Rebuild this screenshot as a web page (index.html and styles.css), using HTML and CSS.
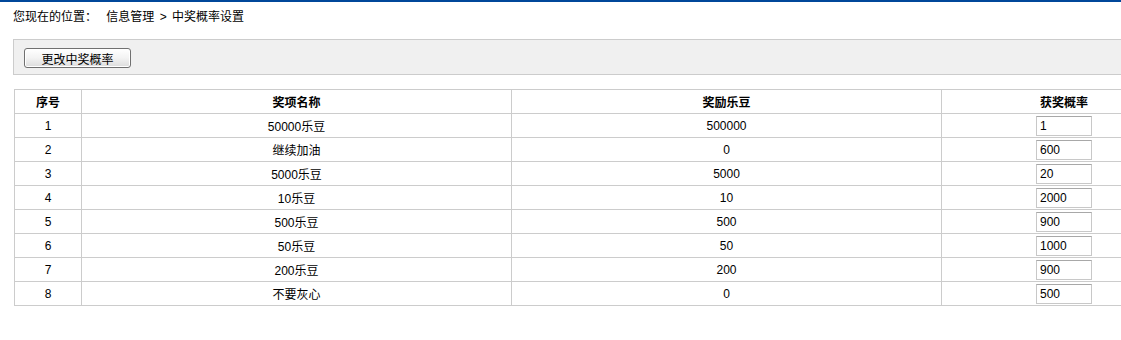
FILE: index.html
```html
<!DOCTYPE html>
<html lang="zh-CN">

<head>
    <meta charset="UTF-8">
    <title>中奖概率设置</title>
    <link rel="stylesheet" href="styles.css">
</head>

<body>
    <div class="page">
        <div class="position">
            <span class="label">您现在的位置：</span>
            <span>信息管理</span>
            <span class="sep">&gt;</span>
            <span>中奖概率设置</span>
        </div>

        <div class="toolbar">
            <button class="btn" type="button">更改中奖概率</button>
        </div>

        <table class="list">
            <thead>
                <tr>
                    <th class="col-no">序号</th>
                    <th class="col-name">奖项名称</th>
                    <th class="col-bean">奖励乐豆</th>
                    <th class="col-rate">获奖概率</th>
                </tr>
            </thead>
            <tbody>
                <tr><td>1</td><td>50000乐豆</td><td>500000</td><td><input class="rate" type="text" value="1"></td></tr>
                <tr><td>2</td><td>继续加油</td><td>0</td><td><input class="rate" type="text" value="600"></td></tr>
                <tr><td>3</td><td>5000乐豆</td><td>5000</td><td><input class="rate" type="text" value="20"></td></tr>
                <tr><td>4</td><td>10乐豆</td><td>10</td><td><input class="rate" type="text" value="2000"></td></tr>
                <tr><td>5</td><td>500乐豆</td><td>500</td><td><input class="rate" type="text" value="900"></td></tr>
                <tr><td>6</td><td>50乐豆</td><td>50</td><td><input class="rate" type="text" value="1000"></td></tr>
                <tr><td>7</td><td>200乐豆</td><td>200</td><td><input class="rate" type="text" value="900"></td></tr>
                <tr><td>8</td><td>不要灰心</td><td>0</td><td><input class="rate" type="text" value="500"></td></tr>
            </tbody>
        </table>
    </div>
</body>

</html>
```

FILE: styles.css
```css
html, body {
    margin: 0;
    padding: 0;
}

body {
    font-family: "Liberation Sans", "Noto Sans CJK SC", sans-serif;
    font-size: 12px;
    color: #000000;
    background-color: #ffffff;
    border-top: 2px solid #00479a;
    overflow: hidden;
}

.page {
    width: 1190px;
    padding: 0 0 0 13px;
}

.position {
    height: 28px;
    line-height: 28px;
    padding-top: 1px;
}

.position .label {
    margin-right: 6px;
}

.position .sep {
    margin: 0 2px;
}

.toolbar {
    margin-top: 8px;
    height: 36px;
    background-color: #f0f0f0;
    border: 1px solid #cccccc;
    border-right: none;
    padding: 8px 0 0 10px;
    box-sizing: border-box;
}

.btn {
    display: block;
    width: 107px;
    height: 20px;
    padding: 0;
    font-family: "Liberation Sans", "Noto Sans CJK SC", sans-serif;
    font-size: 12px;
    color: #000000;
    background: linear-gradient(#ffffff, #f3f3f3 50%, #dcdcdc);
    border: 1px solid #707070;
    border-radius: 3px;
    box-shadow: inset 0 0 0 1px #ffffff;
}

.list {
    margin-top: 14px;
    margin-left: 1px;
    width: 1173px;
    border-collapse: collapse;
    table-layout: fixed;
}

.list th,
.list td {
    border: 1px solid #cccccc;
    height: 23px;
    padding: 0;
    text-align: center;
    font-size: 12px;
}

.list th {
    font-weight: bold;
}

.col-no {
    width: 66px;
}

.col-name,
.col-bean {
    width: 429px;
}

.rate {
    display: block;
    margin: 0 auto;
    width: 56px;
    height: 20px;
    box-sizing: border-box;
    padding: 0 3px;
    font-family: "Liberation Sans", sans-serif;
    font-size: 12px;
    border: 1px solid #c8c8c8;
    border-top-color: #a8a8a8;
    background-color: #ffffff;
}
```
